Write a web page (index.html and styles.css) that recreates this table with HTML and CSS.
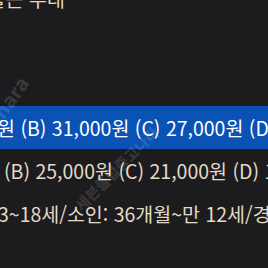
FILE: index.html
```html
<!DOCTYPE html>
<html lang="ko">
<head>
<meta charset="utf-8">
<link rel="stylesheet" href="styles.css">
</head>
<body>
<div class="view">
  <div class="lines">
    <div class="line l0">보훈 대상자 출근 우대</div>
    <div class="line"></div>
    <div class="line"></div>
    <div class="line sel l1">원 (B) 31,000원 (C) 27,000원 (D) 23,000원</div>
    <div class="line l2">(B) 25,000원 (C) 21,000원 (D) 17,000원</div>
    <div class="line l3">3~18세/소인: 36개월~만 12세/경로 우대</div>
  </div>
  <div class="wm wm-a">joonggonara</div>
  <div class="wm wm-b">세븐클럽중고나라</div>
</div>
</body>
</html>
```

FILE: styles.css
```css
html, body {
  margin: 0;
  padding: 0;
  background: #1c1c1e;
}
.view {
  position: relative;
  width: 268px;
  height: 268px;
  overflow: hidden;
  background: #1c1c1e;
}
.lines {
  display: flex;
  flex-direction: column;
  margin-top: -23px;
  font-family: "Noto Sans CJK KR", "Noto Sans", sans-serif;
  font-size: 19.5px;
  color: #e4dac4;
}
.line {
  height: 43px;
  line-height: 43px;
  white-space: nowrap;
  overflow: hidden;
}
.l0 { text-indent: -113px; }
.sel {
  background: #0a52b4;
  color: #ffffff;
}
.l1 { text-indent: -3px; }
.l2 { padding-left: 4px; }
.l3 { text-indent: -2px; }
.wm {
  position: absolute;
  font-family: "Noto Sans", sans-serif;
  font-weight: 700;
  color: rgba(255, 255, 255, 0.15);
  white-space: nowrap;
  transform-origin: right bottom;
}
.wm-a {
  right: 234px;
  bottom: 182px;
  font-size: 20px;
  line-height: 24px;
  transform: rotate(-55deg);
}
.wm-b {
  left: 84px;
  top: 196px;
  font-family: "Noto Sans CJK KR", sans-serif;
  font-size: 15px;
  line-height: 18px;
  transform-origin: left bottom;
  transform: rotate(-45deg);
}
```
